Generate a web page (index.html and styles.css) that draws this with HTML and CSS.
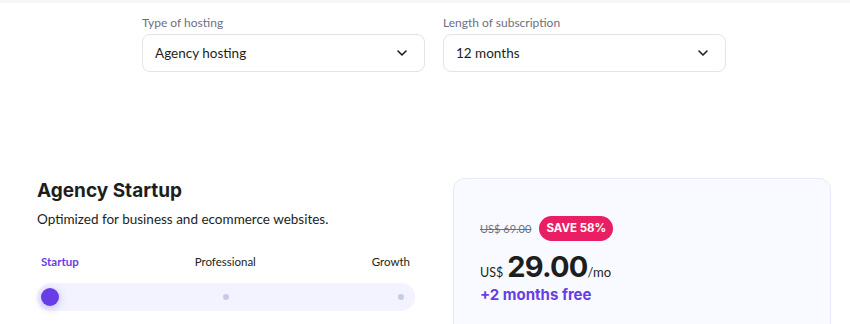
FILE: index.html
```html
<!DOCTYPE html>
<html lang="en">
<head>
  <meta charset="UTF-8">
  <title>Hosting plans</title>
  <link rel="stylesheet" href="styles.css">
</head>
<body>
  <div class="topbar"></div>

  <!-- Filters -->
  <div class="filters">
    <div class="field">
      <div class="field-label">Type of hosting</div>
      <div class="select">
        <span>Agency hosting</span>
        <svg width="16" height="16" viewBox="0 0 16 16"><path d="M4 6l4 4 4-4" fill="none" stroke="#1d1e20" stroke-width="1.6" stroke-linecap="round" stroke-linejoin="round"/></svg>
      </div>
    </div>
    <div class="field">
      <div class="field-label">Length of subscription</div>
      <div class="select">
        <span>12 months</span>
        <svg width="16" height="16" viewBox="0 0 16 16"><path d="M4 6l4 4 4-4" fill="none" stroke="#1d1e20" stroke-width="1.6" stroke-linecap="round" stroke-linejoin="round"/></svg>
      </div>
    </div>
  </div>

  <!-- Plan -->
  <div class="plan">
    <div class="plan-info">
      <h2 class="plan-title">Agency Startup</h2>
      <p class="plan-desc">Optimized for business and ecommerce websites.</p>
      <div class="tiers">
        <span class="tier active">Startup</span>
        <span class="tier">Professional</span>
        <span class="tier">Growth</span>
      </div>
      <div class="track">
        <span class="knob"></span>
        <span class="dot mid"></span>
        <span class="dot"></span>
      </div>
    </div>

    <div class="price-card">
      <div class="old-row">
        <span class="old-price">US$ 69.00</span>
        <span class="save">SAVE 58%</span>
      </div>
      <div class="price-row">
        <span class="currency">US$</span>
        <span class="amount">29.00</span>
        <span class="period">/mo</span>
      </div>
      <div class="bonus">+2 months free</div>
    </div>
  </div>
</body>
</html>
```

FILE: styles.css
```css
body {
  margin: 0;
  background: #fff;
  font-family: "Lato", "Noto Sans", sans-serif;
  color: #1d1e20;
  overflow: hidden;
}

.topbar {
  height: 3px;
  background: #f6f6f9;
}

/* Filters */
.filters {
  display: flex;
  gap: 18px;
  margin-left: 142px;
  padding-top: 12px;
}

.field {
  width: 283px;
}

.field-label {
  font-size: 12px;
  color: #6d7081;
  line-height: 15px;
  margin-bottom: 4px;
}

.select {
  height: 38px;
  box-sizing: border-box;
  border: 1px solid #e3e4ea;
  border-radius: 8px;
  display: flex;
  align-items: center;
  justify-content: space-between;
  padding: 0 14px 0 12px;
  font-size: 13.5px;
}

/* Plan */
.plan {
  display: flex;
  gap: 38px;
  margin-left: 37px;
  margin-top: 106px;
}

.plan-info {
  width: 378px;
}

.plan-title {
  margin: 0;
  font-family: "Inter", sans-serif;
  font-size: 19px;
  font-weight: 700;
  line-height: 26px;
}

.plan-desc {
  margin: 5px 0 0;
  font-size: 13.5px;
  line-height: 20px;
}

.tiers {
  display: flex;
  justify-content: space-between;
  margin-top: 25px;
  padding: 0 5px 0 4px;
  font-size: 11.5px;
  line-height: 16px;
}

.tier.active {
  color: #673de6;
  font-weight: 700;
}

.track {
  margin-top: 13px;
  height: 28px;
  border-radius: 14px;
  background: #f2f3ff;
  display: flex;
  align-items: center;
  justify-content: space-between;
  padding: 0 11px 0 4px;
}

.knob {
  width: 18px;
  height: 18px;
  border-radius: 50%;
  background: #673de6;
  box-shadow: 0 2px 8px rgba(103, 61, 230, 0.35);
}

.dot {
  width: 6px;
  height: 6px;
  border-radius: 50%;
  background: #c7cbe6;
}

.dot.mid {
  margin-right: 6px;
}

/* Price card */
.price-card {
  width: 378px;
  height: 160px;
  box-sizing: border-box;
  border: 1px solid #e6e8fb;
  border-radius: 12px;
  background: #f9faff;
  padding: 37px 26px 0;
}

.old-row {
  display: flex;
  align-items: center;
  gap: 8px;
}

.old-price {
  font-size: 11px;
  color: #6d7081;
  text-decoration: line-through;
}

.save {
  font-family: "Inter", sans-serif;
  background: #e91e63;
  color: #fff;
  font-size: 11.5px;
  font-weight: 700;
  height: 25px;
  line-height: 25px;
  padding: 0 7px;
  border-radius: 13px;
}

.price-row {
  display: flex;
  align-items: baseline;
  margin-top: 8px;
}

.currency {
  font-size: 12.5px;
  margin-right: 4px;
}

.amount {
  font-family: "Inter", sans-serif;
  font-size: 29px;
  font-weight: 700;
  letter-spacing: -0.8px;
}

.period {
  font-size: 13px;
}

.bonus {
  font-family: "Inter", sans-serif;
  color: #673de6;
  font-size: 15px;
  font-weight: 700;
  margin-top: 1px;
}
```
